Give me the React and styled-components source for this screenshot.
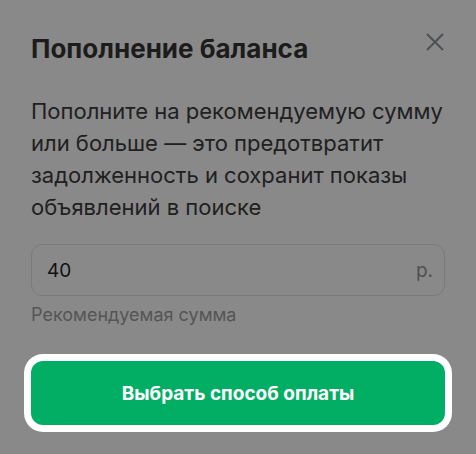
import React from "react";
import styled, { createGlobalStyle } from "styled-components";

const Global = createGlobalStyle`
  html, body { margin: 0; padding: 0; background: #898989; }
  body { font-family: Inter, "Noto Sans", sans-serif; }
  * { box-sizing: border-box; }
`;

const Sheet = styled.div`
  width: 476px;
  height: 454px;
  background: #898989;
  padding: 33px 31px 0 31px;
  display: flex;
  flex-direction: column;
`;

const Header = styled.div`
  display: flex;
  justify-content: space-between;
  align-items: flex-start;
`;

const Title = styled.h1`
  margin: 0;
  font-size: 26px;
  line-height: 31px;
  font-weight: 700;
  color: #1c1c1c;
`;

const Close = styled.button`
  border: 0;
  background: none;
  padding: 0;
  margin: 0 1px 0 0;
  width: 18px;
  height: 18px;
  display: flex;
  color: #4a5256;
`;

const Text = styled.p`
  margin: 31px 0 0 0;
  font-size: 22px;
  line-height: 32px;
  color: #202020;
`;

const Field = styled.div`
  margin-top: 21px;
  height: 52px;
  border: 1px solid #7b7b7b;
  border-radius: 11px;
  display: flex;
  align-items: center;
  justify-content: space-between;
  padding: 0 11px 0 15px;
`;

const Value = styled.span`
  font-size: 19px;
  color: #111;
`;

const Unit = styled.span`
  font-size: 19px;
  color: #505050;
`;

const Hint = styled.div`
  margin-top: 8px;
  font-size: 18px;
  line-height: 22px;
  color: #555;
`;

const Primary = styled.button`
  margin-top: 35px;
  height: 64px;
  border: 0;
  border-radius: 12px;
  background: #02ae63;
  color: #fff;
  font-family: Inter, "Noto Sans", sans-serif;
  font-size: 19px;
  font-weight: 700;
  box-shadow: 0 0 0 7px #fff;
  width: 100%;
`;

export default function App() {
  return (
    <>
      <Global />
      <Sheet>
        <Header>
          <Title>Пополнение баланса</Title>
          <Close aria-label="Закрыть">
            <svg width="18" height="18" viewBox="0 0 18 18" fill="none">
              <path d="M1 1L17 17M17 1L1 17" stroke="currentColor" strokeWidth="2" />
            </svg>
          </Close>
        </Header>
        <Text>
          Пополните на рекомендуемую сумму или больше — это предотвратит задолженность и сохранит показы объявлений в поиске
        </Text>
        <Field>
          <Value>40</Value>
          <Unit>р.</Unit>
        </Field>
        <Hint>Рекомендуемая сумма</Hint>
        <Primary>Выбрать способ оплаты</Primary>
      </Sheet>
    </>
  );
}
